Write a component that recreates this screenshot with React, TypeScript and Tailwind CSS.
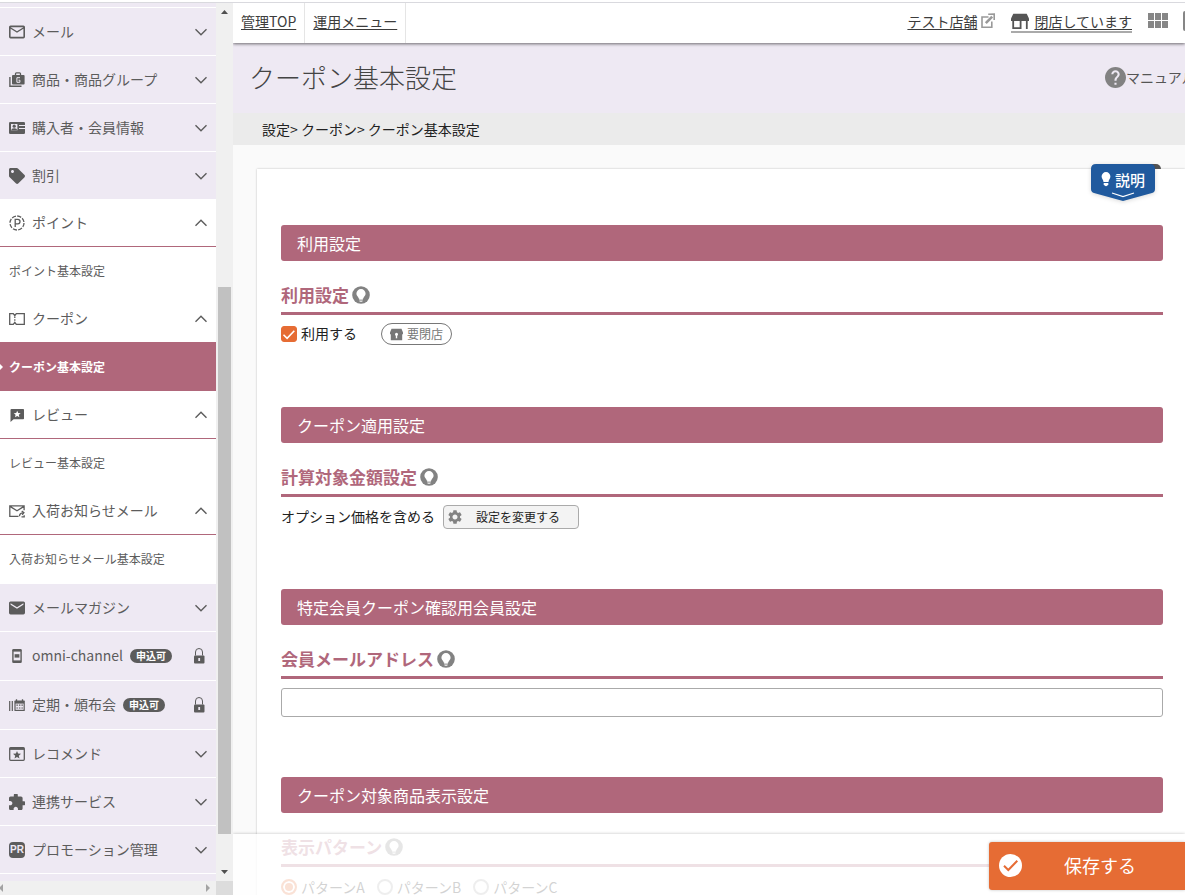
import type { ReactNode } from 'react';
import { MdExtension, MdHelp, MdMail, MdMailOutline, MdSettings } from 'react-icons/md';
import { FaTag } from 'react-icons/fa';

/* ---------- icons ---------- */

const Chevron = ({ up = false }: { up?: boolean }) => (
  <svg viewBox="0 0 12 8" className="h-2 w-3 shrink-0" fill="none" stroke="currentColor" strokeWidth="1.4">
    <path d={up ? 'M.5 6.8 6 1.2l5.500 5.600' : 'M.5 1.200 6 6.800l5.500-5.600'} />
  </svg>
);

const Lock = () => (
  <svg viewBox="0 0 12 16" className="h-4 w-3 shrink-0" fill="none">
    <path d="M2.5 7.5V4a3.5 3.5 0 0 1 7 0v3.5" stroke="currentColor" strokeWidth="1" />
    <rect x="1" y="7.5" width="10.5" height="8" rx="1" fill="currentColor" />
    <path d="M5.300 10h1.800v3H5.300z" fill="#eee9f3" />
  </svg>
);

const GoodsIcon = () => (
  <svg viewBox="0 0 16 16" className="size-4">
    <path d="M.9 5v9.200h11.600" fill="none" stroke="currentColor" strokeWidth="1.4" />
    <path d="M6.500 3.500V1.800q0-.9.9-.9h3.200q.9 0 .9.9v1.700" fill="none" stroke="currentColor" strokeWidth="1.3" />
    <rect x="3" y="3" width="12.6" height="9.6" rx="1" fill="currentColor" />
    <path d="M11 5.700H7.900v4.600h3V8.200H9.500" fill="none" stroke="#eee9f3" strokeWidth="1" />
  </svg>
);

const MemberIcon = () => (
  <svg viewBox="0 0 16 16" className="size-4">
    <rect x="0" y="2" width="16" height="12" rx="1.3" fill="currentColor" />
    <path d="M2 4h6.400v6.300H2z" fill="#eee9f3" />
    <circle cx="5.2" cy="6.2" r="1.6" fill="currentColor" />
    <path d="M2.300 10.300q0-2 2.900-2t2.900 2z" fill="currentColor" />
    <path d="M10 5.500h6M10 8.500h6" stroke="#eee9f3" strokeWidth="1" />
  </svg>
);

const PointIcon = () => (
  <svg viewBox="0 0 16 16" className="size-4" fill="none" stroke="currentColor" strokeWidth="1.3">
    <circle cx="8" cy="8" r="7" strokeDasharray="4.2 1.3" />
    <path d="M6.200 12V4.400h2.600a2.200 2.200 0 0 1 0 4.400H6.200" />
  </svg>
);

const CouponIcon = () => (
  <svg viewBox="0 0 16 16" className="size-4" fill="none" stroke="currentColor" strokeWidth="1.3">
    <path d="M.7 2.700h3.600l1.500 2 1.500-2h8v10.600h-8l-1.500-2-1.500 2H.7z" />
    <path d="M5.800 5.600v5" strokeDasharray="1.5 1.2" />
  </svg>
);

const ReviewIcon = () => (
  <svg viewBox="0 0 16 16" className="size-4">
    <path d="M2.500 2h11.700q.8 0 .8.8v8.700q0 .8-.8.8H4.600L1.500 15V3q0-1 1-1z" fill="currentColor" />
    <path d="m8.200 3.700 1 2.300 2.500.2-1.900 1.600.6 2.400-2.200-1.300L6 10.200l.6-2.400-1.900-1.600L7.200 6z" fill="#fff" />
  </svg>
);

const RestockIcon = () => (
  <svg viewBox="0 0 16 16" className="size-4" fill="none" stroke="currentColor" strokeWidth="1.3">
    <path d="M9.500 13.300H.8V2.800h14.300v4.500M1 3.400l7 4.400 7-4.400" />
    <path d="M10.500 13.200c0-2.500 1.500-3.400 4-3.600M12.700 7.900l2.200 1.700-1.700 2.200M12.500 13.800h2.700v-1.600" />
  </svg>
);

const OmniIcon = () => (
  <svg viewBox="0 0 16 16" className="size-4">
    <rect x="3.2" y="1" width="9.6" height="14" rx="1.3" fill="currentColor" />
    <path d="M4.600 3.600h6.800v8.800H4.600z" fill="#eee9f3" />
    <path d="M5.600 6.200h4.800v3.400H5.600z" fill="currentColor" />
  </svg>
);

const PeriodIcon = () => (
  <svg viewBox="0 0 16 16" className="size-4">
    <path d="M.7 4v10M3.300 4v10" stroke="currentColor" strokeWidth="1.2" />
    <path d="M7.500 2.300V4M13.500 2.300V4" stroke="currentColor" strokeWidth="1.3" />
    <rect x="5.4" y="3.6" width="10.4" height="10.4" rx=".6" fill="currentColor" />
    <path d="M6.600 6.600h8v6.200h-8z" fill="#eee9f3" />
    <path d="M7.400 8.200h6.600M7.400 11h6.600" stroke="currentColor" strokeWidth="1.2" strokeDasharray="1.5 1" />
  </svg>
);

const RecommendIcon = () => (
  <svg viewBox="0 0 16 16" className="size-4">
    <rect x=".7" y="1.7" width="14.6" height="12.6" rx="1" fill="none" stroke="currentColor" strokeWidth="1.3" />
    <path d="M.7 1.700h14.600v2.200H.7z" fill="currentColor" />
    <path d="m8 4.900 1.100 2.700 2.900.2-2.200 1.900.7 2.800L8 11l-2.500 1.500.7-2.800L4 7.800l2.900-.2z" fill="currentColor" />
  </svg>
);

const PrIcon = () => (
  <span className="flex size-4 items-center justify-center rounded-sm bg-[#5c5c5c] font-['Liberation_Sans',sans-serif] text-[10px] leading-4 font-bold text-[#eee9f3]">
    PR
  </span>
);

const ExternalIcon = () => (
  <svg viewBox="0 0 16 16" className="size-4" fill="none" stroke="#999" strokeWidth="1.6">
    <path d="M8.500 4H2v10.200h9.800V8.500" />
    <path d="M5.800 10.200 12.200 3.600" strokeWidth="2.6" />
    <path d="m8.200 1.200 6-.2v6" />
  </svg>
);

const StoreIcon = () => (
  <svg viewBox="0 0 18 17" className="h-[17px] w-[18px]">
    <path d="M2.300.8h13.400L18 5.600v2.400H0V5.600z" fill="#555" />
    <path d="M2.200 7.500v7.600h7.400V7.500M15.800 7.500V16" fill="none" stroke="#555" strokeWidth="1.8" />
  </svg>
);

const GridIcon = () => (
  <svg viewBox="0 0 20 16" className="h-4 w-5" fill="#868686">
    <path d="M0 0h6v7H0zM7 0h6v7H7zM14 0h6v7h-6zM0 8h6v7H0zM7 8h6v7H7zM14 8h6v7h-6z" />
  </svg>
);

const HintIcon = () => (
  <svg viewBox="0 0 18 18" className="size-[18px]">
    <circle cx="9" cy="9" r="8.8" fill="#828282" />
    <path
      d="M9 3a4.700 4.700 0 0 0-4.600 4.700c0 1.900 1.700 2.700 2.200 4.300.2.500.3.900.9.900h3c.6 0 .7-.4.9-.9.500-1.600 2.200-2.400 2.200-4.300A4.700 4.700 0 0 0 9 3z"
      fill="#fff"
    />
    <path d="M7.100 13.800h3.800M7.600 15.300h2.800" stroke="#fff" strokeWidth=".9" />
  </svg>
);

const ClosedShopIcon = () => (
  <svg viewBox="0 0 13 13" className="size-[13px]">
    <path d="M1.500.8h10L13 4.500v1.700h-.8v6H.8v-6H0V4.500z" fill="#777" />
    <circle cx="6.5" cy="6.3" r="1.500" fill="#fff" />
    <path d="M5.800 6.500h1.400v3.800H5.800z" fill="#fff" />
  </svg>
);

/* ---------- side menu ---------- */

type Item = {
  label: string;
  icon: ReactNode;
  children?: { label: string; active?: boolean }[];
  locked?: boolean;
};

const menuTop: Item[] = [
  { label: 'メール', icon: <MdMailOutline viewBox="2 2 20 20" className="size-4" /> },
  { label: '商品・商品グループ', icon: <GoodsIcon /> },
  { label: '購入者・会員情報', icon: <MemberIcon /> },
  { label: '割引', icon: <FaTag className="size-4" /> },
];

const menuOpen: Item[] = [
  { label: 'ポイント', icon: <PointIcon />, children: [{ label: 'ポイント基本設定' }] },
  { label: 'クーポン', icon: <CouponIcon />, children: [{ label: 'クーポン基本設定', active: true }] },
  { label: 'レビュー', icon: <ReviewIcon />, children: [{ label: 'レビュー基本設定' }] },
  { label: '入荷お知らせメール', icon: <RestockIcon />, children: [{ label: '入荷お知らせメール基本設定' }] },
];

const menuBottom: Item[] = [
  { label: 'メールマガジン', icon: <MdMail viewBox="2 2 20 20" className="size-4" /> },
  { label: 'omni-channel', icon: <OmniIcon />, locked: true },
  { label: '定期・頒布会', icon: <PeriodIcon />, locked: true },
  { label: 'レコメンド', icon: <RecommendIcon /> },
  { label: '連携サービス', icon: <MdExtension viewBox="2 2 20 20" className="size-4" /> },
  { label: 'プロモーション管理', icon: <PrIcon /> },
];

const ClosedRow = ({ item }: { item: Item }) => (
  <button
    type="button"
    aria-expanded={false}
    className={`flex w-full shrink-0 items-center gap-[7px] border-b border-white bg-[#eee9f3] px-[9px] text-left ${item.locked ? 'h-[49px]' : 'h-12'}`}
  >
    <span className="flex w-4 justify-center">{item.icon}</span>
    <span className="pb-0.5">{item.label}</span>
    {item.locked && (
      <span className="rounded-full bg-[#5c5c5c] px-1.5 text-[10px] leading-[14px] font-bold text-white">申込可</span>
    )}
    <span className={item.locked ? 'mr-0.5 ml-auto' : 'ml-auto'}>{item.locked ? <Lock /> : <Chevron />}</span>
  </button>
);

const OpenGroup = ({ item }: { item: Item }) => (
  <div className="shrink-0 bg-white">
    <button
      type="button"
      aria-expanded={true}
      className="flex h-12 w-full items-center gap-[7px] border-b border-[#b0677b] px-[9px] text-left"
    >
      <span className="flex w-4 justify-center">{item.icon}</span>
      <span className="pb-0.5">{item.label}</span>
      <span className="ml-auto"><Chevron up /></span>
    </button>
    {item.children?.map((c) => (
      <a
        key={c.label}
        href="#"
        className={`flex h-12 items-center text-xs ${c.active ? 'bg-[#b0677b] font-bold text-white' : ''}`}
      >
        <svg viewBox="0 0 4 8" className="h-2 w-1" fill={c.active ? '#fff' : 'none'}>
          <path d="M0 1l3 3-3 3z" />
        </svg>
        <span className="pl-[5px]">{c.label}</span>
      </a>
    ))}
  </div>
);

const Sidebar = () => (
  <aside className="flex w-[233px] shrink-0 flex-col text-[#5c5c5c]">
    <div className="flex min-h-0 flex-1">
      <nav className="flex min-w-0 flex-1 flex-col overflow-hidden bg-[#eee9f3]">
        <div className="h-[5px] shrink-0 border-b border-white" />
        {menuTop.map((i) => <ClosedRow key={i.label} item={i} />)}
        <div className="-mt-px">
          {menuOpen.map((i) => <OpenGroup key={i.label} item={i} />)}
        </div>
        <div className="h-px shrink-0 bg-white" />
        {menuBottom.map((i) => <ClosedRow key={i.label} item={i} />)}
      </nav>
      <div className="flex w-[17px] shrink-0 flex-col items-center bg-[#f0f0f0]" aria-hidden="true">
        <svg viewBox="0 0 17 17" className="size-[17px]" fill="#505050"><path d="M5 11l3.500-4 3.500 4z" /></svg>
        <div className="flex-[267]" />
        <div className="w-[13px] flex-[547] bg-[#c1c1c1]" />
        <div className="flex-[30]" />
        <svg viewBox="0 0 17 17" className="size-[17px]" fill="#505050"><path d="M5 6l3.500 4 3.500-4z" /></svg>
      </div>
    </div>
    <div className="flex h-3.5 shrink-0 bg-[#dcdcdc]" aria-hidden="true">
      <div className="flex w-[216px] items-center justify-between bg-[#f0f0f0] pr-1.5">
        <svg viewBox="0 0 4 8" className="h-2 w-1" fill="#a3a3a3"><path d="M3 0v8L-1 4z" /></svg>
        <svg viewBox="0 0 4 8" className="h-2 w-1" fill="#a3a3a3"><path d="M0 0v8l4-4z" /></svg>
      </div>
    </div>
  </aside>
);

/* ---------- main ---------- */

const TopBar = () => (
  <header className="relative z-10 flex h-10 shrink-0 items-stretch bg-white text-[#3c3c3c] shadow-[0_1px_3px_rgba(0,0,0,0.55)]">
    <a href="#" className="flex items-center border-r border-[#e5e5e5] px-2 pb-1 underline underline-offset-2">管理TOP</a>
    <a href="#" className="flex items-center border-r border-[#e5e5e5] px-2 pb-1 underline underline-offset-2">運用メニュー</a>
    <div className="ml-auto flex items-center pb-1">
      <a href="#" className="flex items-center gap-[3px] underline underline-offset-2">テスト店舗<ExternalIcon /></a>
      <a href="#" className="ml-[15px] flex items-center gap-[5px] border-b-2 border-[#aaa] pt-0.5 underline underline-offset-2">
        <StoreIcon />閉店しています
      </a>
      <button type="button" aria-label="メニュー一覧" className="ml-4"><GridIcon /></button>
      <span className="ml-[15px] h-5 w-0.5 rounded-l-sm bg-[#868686]" />
    </div>
  </header>
);

const Section = ({ title, heading, children }: { title: string; heading: string; children: ReactNode }) => (
  <section>
    <h2 className="flex h-9 items-center rounded-[3px] bg-[#b0677b] px-4 text-base text-white">{title}</h2>
    <h3 className="flex h-[54px] items-center gap-[3px] border-b-[3px] border-[#b0677b] pt-[17px] text-[17px] font-bold text-[#b0677b]">
      {heading}<HintIcon />
    </h3>
    {children}
  </section>
);

const Radio = ({ label, checked = false }: { label: string; checked?: boolean }) => (
  <label className="flex items-center gap-1">
    <input
      type="radio"
      name="pattern"
      defaultChecked={checked}
      className="size-4 appearance-none rounded-full border-2 border-[#aaa] bg-white checked:border-[#e66c34] checked:bg-[#e66c34] checked:shadow-[inset_0_0_0_2px_#fff]"
    />
    {label}
  </label>
);

const ExplainBadge = () => (
  <>
    <span className="absolute -top-[5px] right-6 h-[5px] w-8 rounded-tr-md bg-[#555]" />
    <button type="button" className="absolute -top-[5px] right-[30px] h-[37px] w-16 text-white">
      <svg viewBox="0 0 64 37" className="absolute inset-0 h-[37px] w-16 drop-shadow-sm">
        <path d="M5 0h54q5 0 5 5v20q0 3-3 4L32 37 3 29q-3-1-3-4V5q0-5 5-5z" fill="#205a9e" />
        <path d="m21 29 11 3.500L43 29" fill="none" stroke="#fff" strokeWidth="1.2" />
        <path d="M15 8a4.500 4.500 0 0 0-4.400 4.600c0 2.400 1.900 3 1.900 5.400h5c0-2.400 1.900-3 1.900-5.400A4.500 4.500 0 0 0 15 8z" fill="#fff" />
        <path d="M12.700 19h4.600v1.200q-1 2-2.300 2t-2.300-2z" fill="#fff" />
      </svg>
      <span className="relative flex h-full items-center pb-1.5 pl-6 text-[15px] leading-5 font-medium">説明</span>
    </button>
  </>
);

export default function App() {
  return (
    <div className="flex h-screen flex-col overflow-hidden bg-white pt-0.5 font-['Noto_Sans_CJK_JP',sans-serif] text-sm whitespace-nowrap text-[#555]">
      <div className="h-px shrink-0 bg-[#d9d9de]" />
      <div className="flex min-h-0 flex-1">
        <Sidebar />
        <main className="relative flex min-w-0 flex-1 flex-col overflow-hidden bg-[#fafafa]">
          <TopBar />
          <div className="flex h-[70px] shrink-0 items-center justify-between bg-[#eee9f3] pb-0.5 pl-4">
            <h1 className="font-['Noto_Sans_CJK_JP_Light','Noto_Sans_CJK_JP',sans-serif] text-[26px] font-light text-[#444]">クーポン基本設定</h1>
            <a href="#" className="flex w-20 items-center">
              <MdHelp viewBox="2 2 20 20" className="size-[21px] shrink-0 text-[#828282]" />マニュアル
            </a>
          </div>
          <div className="flex h-8 shrink-0 items-center bg-[#ebebeb] pl-[29px] text-[#222]">設定&gt; クーポン&gt; クーポン基本設定</div>

          <div className="relative mt-6 ml-6 flex-1 bg-white pt-14 pr-[22px] pl-6 text-[#222] shadow-[0_0_2px_rgba(0,0,0,0.25)]">
            <ExplainBadge />
            <Section title="利用設定" heading="利用設定">
              <div className="flex h-[92px] items-start pt-2">
                <label className="flex h-[22px] items-center gap-1">
                  <span className="grid size-4">
                    <input
                      type="checkbox"
                      defaultChecked
                      className="col-start-1 row-start-1 size-4 appearance-none rounded-[3px] border border-[#e66c34] bg-white checked:bg-[#e66c34]"
                    />
                    <svg viewBox="0 0 16 16" className="pointer-events-none col-start-1 row-start-1 size-4" fill="none" stroke="#fff" strokeWidth="1.6">
                      <path d="m2.500 8.700 3.600 3.600 7.200-7.600" />
                    </svg>
                  </span>
                  <span className="pb-0.5">利用する</span>
                </label>
                <span className="ml-6 flex h-[22px] items-center gap-1 rounded-full border border-[#777] px-2 text-xs text-[#777]">
                  <ClosedShopIcon />要閉店
                </span>
              </div>
            </Section>

            <Section title="クーポン適用設定" heading="計算対象金額設定">
              <div className="flex h-[92px] items-start gap-2 pt-2">
                <span className="leading-[22px]">オプション価格を含める</span>
                <button
                  type="button"
                  className="flex h-6 w-[136px] items-center gap-3.5 rounded-sm border border-[#aaa] bg-[#f3f3f3] pl-1 text-xs"
                >
                  <MdSettings className="size-3.5 text-[#828282]" viewBox="2 2 20 20" />設定を変更する
                </button>
              </div>
            </Section>

            <Section title="特定会員クーポン確認用会員設定" heading="会員メールアドレス">
              <div className="h-[98px] pt-[9px]">
                <input
                  type="email"
                  aria-label="会員メールアドレス"
                  className="block h-[29px] w-full rounded-[3px] border border-[#aaa] bg-white px-2 outline-none"
                />
              </div>
            </Section>

            <Section title="クーポン対象商品表示設定" heading="表示パターン">
              <div className="flex gap-3 pt-2.5">
                <Radio label="パターンA" checked />
                <Radio label="パターンB" />
                <Radio label="パターンC" />
              </div>
            </Section>
          </div>

          <div className="absolute inset-x-0 bottom-0 z-10 flex h-[61px] items-start justify-end bg-white/80 pt-2 shadow-[0_0_3px_rgba(0,0,0,0.25)]">
            <button
              type="button"
              className="flex h-12 w-[196px] items-center gap-[42px] rounded-l-[3px] bg-[#e66c34] pb-0.5 pl-2.5 text-lg text-white shadow-[0_0_3px_rgba(0,0,0,0.25)]"
            >
              <svg viewBox="0 0 23 23" className="size-[23px]">
                <circle cx="11.5" cy="11.5" r="11.5" fill="#fff" />
                <path d="m5 11.800 4.300 4.200 9-9.200" fill="none" stroke="#e66c34" strokeWidth="2" />
              </svg>
              保存する
            </button>
          </div>
        </main>
      </div>
    </div>
  );
}
